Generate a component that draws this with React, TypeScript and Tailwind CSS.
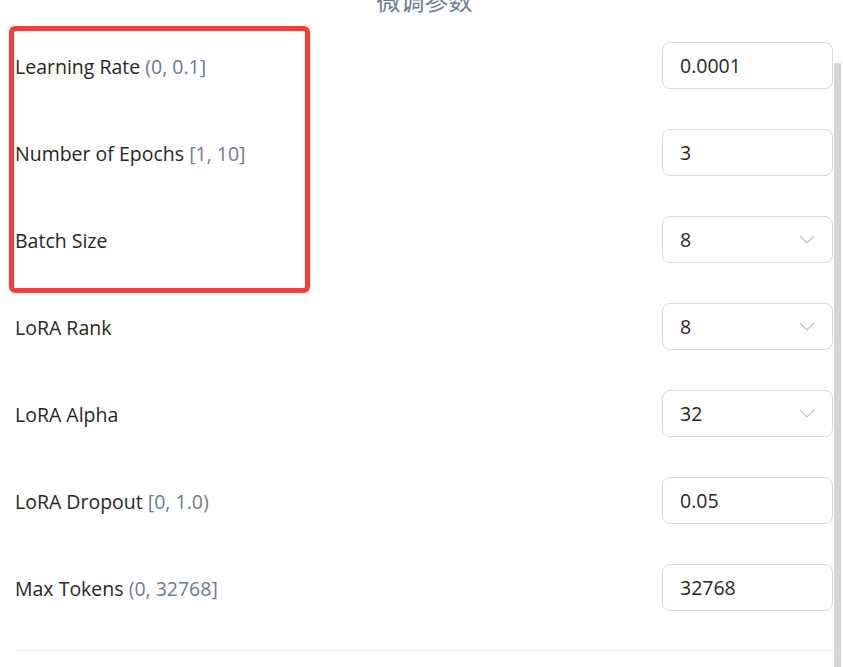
type Param = {
  label: string
  range?: string
  value: string
  select?: boolean
}

const params: Param[] = [
  { label: 'Learning Rate', range: '(0, 0.1]', value: '0.0001' },
  { label: 'Number of Epochs', range: '[1, 10]', value: '3' },
  { label: 'Batch Size', value: '8', select: true },
  { label: 'LoRA Rank', value: '8', select: true },
  { label: 'LoRA Alpha', value: '32', select: true },
  { label: 'LoRA Dropout', range: '[0, 1.0)', value: '0.05' },
  { label: 'Max Tokens', range: '(0, 32768]', value: '32768' },
]

function Chevron() {
  return (
    <svg width="16" height="9" viewBox="0 0 16 9" fill="none" className="shrink-0">
      <polyline points="1,1 8,8 15,1" stroke="#bfbfbf" strokeWidth="1.2" />
    </svg>
  )
}

export default function App() {
  return (
    <div
      className="relative w-[843px] h-[667px] overflow-hidden bg-white text-[19.5px] text-[#262626]"
      style={{ fontFamily: '"Open Sans", "Noto Sans CJK SC", sans-serif' }}
    >
      <div className="flex h-full">
        {/* Main form */}
        <div className="w-[834px] pl-[15px]">
          {/* Section title, cut off at top */}
          <div className="-mt-[15px] h-[37px] text-center text-[24px] leading-[32px] text-[#6b7b93]">
            微调参数
          </div>

          <div className="flex flex-col">
            {params.map((p) => (
              <div key={p.label} className="flex h-[87px] items-center justify-between">
                <div className="pt-[2px] leading-[28px]">
                  {p.label}
                  {p.range && <span className="text-[#6b7b93]"> {p.range}</span>}
                </div>
                <div className="mr-[1px] flex h-[47px] w-[171px] items-center justify-between rounded-[8px] border border-[#d9d9d9] pl-[17px] pr-[17px]">
                  <span className="pt-[1px]">{p.value}</span>
                  {p.select && <Chevron />}
                </div>
              </div>
            ))}
          </div>

          <div className="mt-[19px] border-t border-[#eeeeee]" />
        </div>

        {/* Scrollbar */}
        <div className="w-[7px] pt-[63px]">
          <div className="h-full w-full bg-[#d6d6d6]" />
        </div>
      </div>

      {/* Annotation highlight */}
      <div className="absolute left-[9px] top-[26px] h-[267px] w-[301px] rounded-[6px] border-[5px] border-[#ff3838]" />
    </div>
  )
}
